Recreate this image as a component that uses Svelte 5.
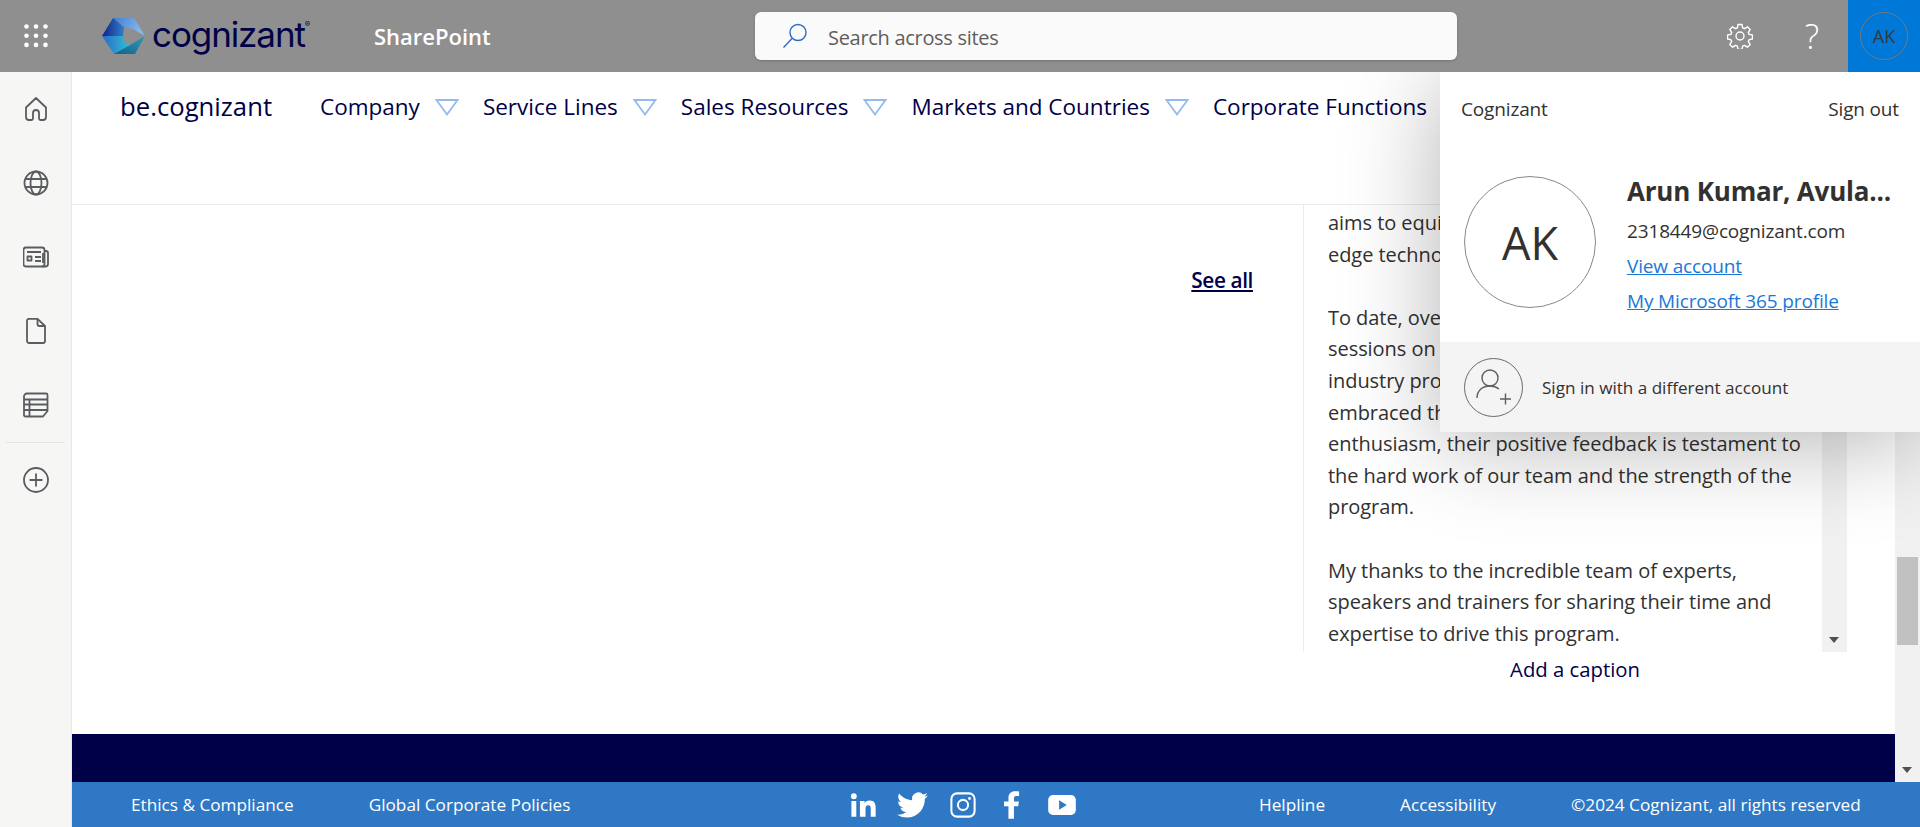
<script>
	const navItems = ['Company', 'Service Lines', 'Sales Resources', 'Markets and Countries', 'Corporate Functions'];
	const footerLeft = ['Ethics & Compliance', 'Global Corporate Policies'];
	const dots = [0, 1, 2];
	const article = [
		['aims to equip our associates with cutting-', 'edge technologies and practical skills.'],
		[
			'To date, over 5,000 colleagues attended',
			'sessions on our platform led by seasoned',
			'industry professionals. Our associates have',
			'embraced the program with remarkable',
			'enthusiasm, their positive feedback is testament to',
			'the hard work of our team and the strength of the',
			'program.'
		],
		[
			'My thanks to the incredible team of experts,',
			'speakers and trainers for sharing their time and',
			'expertise to drive this program.'
		]
	];
</script>

<div class="page">
	<header class="suite">
		<button class="waffle" aria-label="App launcher">
			<svg width="24" height="24" viewBox="0 0 24 24" fill="#fff">
				{#each dots as row}
					{#each dots as col}
						<circle cx={2.5 + col * 9.5} cy={2.5 + row * 9.2} r="2.3" />
					{/each}
				{/each}
			</svg>
		</button>
		<div class="brand">
			<svg class="hex" width="44" height="37" viewBox="0 0 44 37">
				<defs>
					<linearGradient id="top" x1="0" y1="0" x2="1" y2="0.3">
						<stop offset="0" stop-color="#3f7fcf" />
						<stop offset="1" stop-color="#86b8ee" />
					</linearGradient>
					<linearGradient id="left" x1="0" y1="0" x2="1" y2="0">
						<stop offset="0" stop-color="#14208a" />
						<stop offset="1" stop-color="#2f7fc4" />
					</linearGradient>
					<linearGradient id="low" x1="0" y1="0" x2="1" y2="0">
						<stop offset="0" stop-color="#2a6cc8" />
						<stop offset="1" stop-color="#2fc0d4" />
					</linearGradient>
					<linearGradient id="deep" x1="0" y1="1" x2="1" y2="0">
						<stop offset="0" stop-color="#14608c" />
						<stop offset="1" stop-color="#2c9cb4" />
					</linearGradient>
				</defs>
				<polygon points="11,0 32,0 43,18 31,11 22,9" fill="url(#top)" />
				<polygon points="0,18 11,0 22,9 21,18" fill="url(#left)" />
				<polygon points="0,18 21,18 21,23 28,27 12,36" fill="url(#low)" />
				<polygon points="43,18 33,36 12,36 28,27" fill="url(#deep)" />
			</svg>
			<span class="wordmark">cognizant<sup>®</sup></span>
		</div>
		<span class="product">SharePoint</span>
		<div class="search">
			<svg width="26" height="26" viewBox="0 0 26 26" fill="none" stroke="#2b6fc4" stroke-width="1.4">
				<circle cx="16" cy="9.5" r="8" />
				<path d="M10.3 15.2 1.5 24.5" />
			</svg>
			<span>Search across sites</span>
		</div>
		<div class="suite-actions">
			<button class="action" aria-label="Settings">
				<svg width="26" height="26" viewBox="0 0 26 26" fill="none" stroke="#fff" stroke-width="1.4" stroke-linejoin="round">
					<path d="M11 1.5h4l.6 3.3 2 .9 2.8-1.9 2.8 2.8-1.9 2.8.9 2 3.3.6v4l-3.3.6-.9 2 1.9 2.8-2.8 2.8-2.8-1.9-2 .9-.6 3.3h-4l-.6-3.3-2-.9-2.8 1.9-2.8-2.8 1.9-2.8-.9-2-3.3-.6v-4l3.3-.6.9-2-1.9-2.8 2.8-2.8 2.8 1.9 2-.9z" />
					<circle cx="13" cy="13" r="4" />
				</svg>
			</button>
			<button class="action help" aria-label="Help">?</button>
			<div class="me"><span>AK</span></div>
		</div>
	</header>

	<div class="frame">
		<nav class="rail">
			<button aria-label="Home">
				<svg width="26" height="26" viewBox="0 0 26 26">
					<path d="M3 11.5 13 2l10 9.500V21a3 3 0 0 1-3 3h-2.500a1.500 1.500 0 0 1-1.500-1.500V17a3 3 0 0 0-6 0v5.500A1.500 1.500 0 0 1 8.500 24H6a3 3 0 0 1-3-3z" />
				</svg>
			</button>
			<button aria-label="My sites">
				<svg width="26" height="26" viewBox="0 0 26 26">
					<circle cx="13" cy="13" r="11.500" />
					<ellipse cx="13" cy="13" rx="5.500" ry="11.500" />
					<path d="M2.500 9h21M2.500 17h21" />
				</svg>
			</button>
			<button aria-label="News">
				<svg width="26" height="26" viewBox="0 0 26 26">
					<rect x="0.500" y="3.500" width="21" height="19" rx="2.500" />
					<path d="M21.500 7H23a2 2 0 0 1 2 2v11a2.500 2.500 0 0 1-2.500 2.500H19M4 8h14M12 13h6M12 17h6M20 9v10" />
					<rect x="4.500" y="12.500" width="4" height="4" />
				</svg>
			</button>
			<button aria-label="Files">
				<svg width="26" height="26" viewBox="0 0 26 26">
					<path d="M6 .8h8.500L22 8v15a2 2 0 0 1-2 2H6a2 2 0 0 1-2-2V2.800a2 2 0 0 1 2-2z" />
					<path d="M14.500 .8V6a2 2 0 0 0 2 2H22" />
				</svg>
			</button>
			<button aria-label="Lists">
				<svg width="26" height="26" viewBox="0 0 26 26">
					<path d="M4 1.500h19a1.500 1.500 0 0 1 1.500 1.500v16L20 24.500H2.500A1.500 1.500 0 0 1 1 23V4.500a3 3 0 0 1 3-3z" />
					<path d="M1 7.500h23.500M1 12.500h23.500M1 18h23M6.500 7.500v17" />
				</svg>
			</button>
			<hr />
			<button aria-label="Create">
				<svg width="26" height="26" viewBox="0 0 26 26">
					<circle cx="13" cy="13" r="12" />
					<path d="M13 6.500v13M6.500 13h13" />
				</svg>
			</button>
		</nav>

		<main class="main">
			<div class="scroller">
				<div class="content">
					<div class="site-nav">
						<span class="site-name">be.cognizant</span>
						{#each navItems as item}
							<span class="nav-item">
								{item}
								<svg width="24" height="17" viewBox="0 0 24 17" fill="none" stroke="#93bbee" stroke-width="1.800">
									<path d="M1.500 1h21L12 15.500z" />
								</svg>
							</span>
						{/each}
					</div>
					<div class="body">
						<div class="left">
							<a class="see-all" href="#all">See all</a>
						</div>
						<div class="right">
							<div class="story">
								<div class="story-text">
									{#each article as para}
										<p>
											{#each para as line}
												<span>{line}</span>
											{/each}
										</p>
									{/each}
								</div>
								<div class="inner-bar"><i></i></div>
							</div>
							<div class="caption">Add a caption</div>
						</div>
					</div>
					<div class="band"></div>
				</div>
				<div class="page-bar"><b></b><i></i></div>
			</div>
			<footer class="legal">
				<div class="legal-left">
					{#each footerLeft as link}
						<span>{link}</span>
					{/each}
				</div>
				<div class="social">
					<svg class="in" width="28" height="28" viewBox="0 0 24 24" fill="#fff">
						<path d="M3.300 2a2.500 2.500 0 1 1 0 5 2.500 2.500 0 0 1 0-5zM1.200 8.500h4.200V22H1.200zM8.500 8.500h4v1.900c.7-1.200 2.100-2.200 4.200-2.200 4.500 0 5.300 2.900 5.300 6.700V22h-4.200v-6.300c0-1.500 0-3.500-2.100-3.500s-2.400 1.600-2.400 3.300V22H8.500z" />
					</svg>
					<svg class="tw" width="31" height="26" viewBox="0 2 24 20" fill="#fff">
						<path d="M23.950 4.570a10 10 0 0 1-2.820.77 4.960 4.960 0 0 0 2.160-2.720c-.95.55-2 .96-3.120 1.180a4.920 4.920 0 0 0-8.380 4.480C7.690 8.090 4.070 6.130 1.640 3.160a4.820 4.820 0 0 0-.67 2.480c0 1.710.87 3.210 2.190 4.100a4.900 4.900 0 0 1-2.230-.62v.06a4.920 4.920 0 0 0 3.950 4.830 5 5 0 0 1-2.210.08 4.940 4.940 0 0 0 4.600 3.420A9.870 9.870 0 0 1 0 19.540a14 14 0 0 0 7.560 2.210c9.050 0 14-7.500 14-13.980 0-.21 0-.42-.02-.63a9.940 9.940 0 0 0 2.460-2.550z" />
					</svg>
					<svg class="ig" width="26" height="26" viewBox="0 0 28 28" fill="none" stroke="#fff" stroke-width="2.200">
						<rect x="1.500" y="1.500" width="25" height="25" rx="6" />
						<circle cx="14" cy="14" r="5.500" />
						<circle cx="21" cy="7" r="1.500" fill="#fff" stroke="none" />
					</svg>
					<svg class="fb" width="16" height="30" viewBox="0 0 18 31" fill="#fff">
						<path d="M5 31V17H0v-5.500h5V7.500C5 2.500 8 0 12.300 0c2 0 3.700.2 4.700.3v5h-3c-2.400 0-2.800 1.200-2.800 2.800v3.400h5.600l-.8 5.500h-4.800v14z" />
					</svg>
					<svg class="yt" width="28" height="20" viewBox="0 0 29 21">
						<rect width="29" height="21" rx="5" fill="#fff" />
						<path d="M11.500 5.500v10l8-5z" fill="#2e78c5" />
					</svg>
				</div>
				<div class="legal-right">
					<span>Helpline</span>
					<span>Accessibility</span>
					<span>©2024 Cognizant, all rights reserved</span>
				</div>
			</footer>
		</main>

		<aside class="account">
			<div class="account-top">
				<span>Cognizant</span>
				<span>Sign out</span>
			</div>
			<div class="account-info">
				<div class="big-avatar">AK</div>
				<div class="details">
					<strong>Arun Kumar, Avula...</strong>
					<span>2318449@cognizant.com</span>
					<a href="#view">View account</a>
					<a href="#profile">My Microsoft 365 profile</a>
				</div>
			</div>
			<div class="other-account">
				<div class="add-user">
					<svg width="36" height="38" viewBox="0 0 36 38" fill="none" stroke="#605e5c" stroke-width="1.400">
						<circle cx="14" cy="10" r="8" />
						<path d="M1 30c0-8 6-12 13-12 3.500 0 6.500 1 9 3M24 31h11M29.500 25.500v11" />
					</svg>
				</div>
				<span>Sign in with a different account</span>
			</div>
		</aside>
	</div>
</div>

<style>
	:global(body) {
		margin: 0;
		background: #fff;
		font-family: 'Open Sans', 'Liberation Sans', sans-serif;
		color: #323130;
	}

	button {
		padding: 0;
		border: 0;
		background: none;
		font: inherit;
		display: flex;
		align-items: center;
		justify-content: center;
	}

	.page {
		width: 1920px;
		height: 827px;
		display: flex;
		flex-direction: column;
		overflow: hidden;
	}

	.suite {
		position: relative;
		z-index: 3;
		flex: 0 0 72px;
		display: flex;
		align-items: center;
		background: #8f8f8f;
	}

	.waffle {
		width: 72px;
		height: 72px;
	}

	.brand {
		display: flex;
		align-items: center;
		gap: 6px;
		margin-left: 30px;
		width: 272px;
	}

	.wordmark {
		font-family: Inter, 'Noto Sans', sans-serif;
		font-size: 35px;
		font-weight: 400;
		letter-spacing: -1.100px;
		line-height: 36px;
		color: #000048;
		position: relative;
		top: -2px;
	}

	.wordmark sup {
		font-size: 8px;
		vertical-align: 20px;
		line-height: 0;
		letter-spacing: 0;
	}

	.product {
		width: 381px;
		font-size: 22px;
		font-weight: 600;
		color: #fff;
	}

	.search {
		width: 702px;
		height: 48px;
		box-sizing: border-box;
		padding-left: 27px;
		display: flex;
		align-items: center;
		gap: 20px;
		background: #fafafa;
		border-radius: 6px;
		box-shadow: 0 1px 3px rgba(0, 0, 0, 0.2);
		font-size: 20px;
		letter-spacing: -0.300px;
		color: #605e5c;
	}

	.search span {
		position: relative;
		top: 1px;
	}

	.suite-actions {
		margin-left: auto;
		display: flex;
		align-items: center;
	}

	.action {
		width: 72px;
		height: 72px;
	}

	.help {
		color: #fff;
		font-size: 34px;
		font-weight: 300;
	}

	.me {
		width: 72px;
		height: 72px;
		background: #0078d7;
		display: flex;
		align-items: center;
		justify-content: center;
	}

	.me span {
		width: 46px;
		height: 46px;
		border: 1px solid #6f7a82;
		border-radius: 50%;
		display: flex;
		align-items: center;
		justify-content: center;
		font-size: 18px;
		color: #2f3a44;
	}

	.frame {
		position: relative;
		flex: 1;
		display: flex;
		min-height: 0;
	}

	.rail {
		flex: 0 0 71px;
		background: #f6f6f5;
		border-right: 1px solid #e8e8e8;
		display: flex;
		flex-direction: column;
		align-items: center;
	}

	.rail button {
		width: 71px;
		height: 74px;
	}

	.rail svg {
		fill: none;
		stroke: #5a5d60;
		stroke-width: 1.800;
		stroke-linejoin: round;
	}

	.rail hr {
		width: 59px;
		height: 1px;
		margin: 0;
		border: 0;
		background: #e4e4e4;
	}

	.main {
		flex: 1;
		min-width: 0;
		display: flex;
		flex-direction: column;
	}

	.scroller {
		flex: 1;
		min-height: 0;
		display: flex;
	}

	.content {
		flex: 1;
		min-width: 0;
		display: flex;
		flex-direction: column;
	}

	.site-nav {
		flex: 0 0 133px;
		box-sizing: border-box;
		padding: 18px 0 0 48px;
		border-bottom: 1px solid #ebebeb;
		display: flex;
		align-items: flex-start;
		color: #000048;
	}

	.site-name {
		width: 200px;
		font-size: 25.700px;
		line-height: 34px;
	}

	.nav-item {
		display: flex;
		align-items: center;
		gap: 15px;
		margin-right: 24px;
		font-size: 22.500px;
		line-height: 34px;
		white-space: nowrap;
	}

	.body {
		flex: 1;
		min-height: 0;
		display: flex;
	}

	.left {
		width: 1231px;
		box-sizing: border-box;
		padding: 61px 50px 0 0;
		text-align: right;
	}

	.see-all {
		font-size: 20.800px;
		font-weight: 600;
		letter-spacing: -0.400px;
		color: #000048;
	}

	.right {
		width: 544px;
	}

	.story {
		height: 447px;
		box-sizing: border-box;
		border-left: 1px solid #ebebeb;
		display: flex;
		overflow: hidden;
	}

	.story-text {
		flex: 1;
		padding: 2px 0 0 24px;
		font-size: 20px;
		line-height: 31.600px;
		letter-spacing: -0.050px;
		white-space: nowrap;
	}

	.story-text p {
		margin: 0 0 31.600px;
	}

	.story-text span {
		display: block;
	}

	.inner-bar {
		flex: 0 0 25px;
		position: relative;
		background: #f1f1f1;
	}

	.inner-bar i,
	.page-bar i {
		position: absolute;
		left: 7px;
		bottom: 9px;
		border: 5.500px solid transparent;
		border-top: 6px solid #505050;
		border-bottom: 0;
	}

	.caption {
		padding-top: 4px;
		text-align: center;
		font-size: 20.300px;
		line-height: 27px;
		color: #000048;
	}

	.band {
		flex: 0 0 48px;
		background: #000048;
	}

	.page-bar {
		flex: 0 0 25px;
		position: relative;
		background: #f1f1f1;
	}

	.page-bar b {
		position: absolute;
		top: 485px;
		left: 2px;
		width: 21px;
		height: 88px;
		background: #c1c1c1;
	}

	.legal {
		flex: 0 0 45px;
		display: flex;
		align-items: center;
		background: #2e78c5;
		color: #fff;
		font-size: 17.200px;
	}

	.legal-left {
		width: 778px;
		padding-left: 59px;
		box-sizing: border-box;
		display: flex;
		gap: 75px;
	}

	.social {
		width: 409px;
		display: flex;
		align-items: center;
	}

	.tw {
		margin-left: 19px;
	}

	.ig {
		margin-left: 22px;
	}

	.fb {
		margin-left: 28px;
	}

	.yt {
		margin-left: 28px;
	}

	.legal-right {
		display: flex;
		gap: 75px;
	}

	.account {
		position: absolute;
		z-index: 2;
		top: 0;
		right: 0;
		width: 480px;
		background: #fff;
		box-shadow: 0 10px 90px rgba(0, 0, 0, 0.3);
	}

	.account-top {
		height: 74px;
		box-sizing: border-box;
		padding: 0 21px;
		display: flex;
		align-items: center;
		justify-content: space-between;
		font-size: 19px;
		letter-spacing: -0.150px;
	}

	.account-info {
		height: 196px;
		box-sizing: border-box;
		padding: 30px 0 0 24px;
		display: flex;
		gap: 31px;
	}

	.big-avatar {
		width: 132px;
		height: 132px;
		border: 1px solid #8a8886;
		border-radius: 50%;
		display: flex;
		align-items: center;
		justify-content: center;
		box-sizing: border-box;
		font-size: 45px;
	}

	.details {
		display: flex;
		flex-direction: column;
		margin-top: -4px;
		font-size: 19px;
		letter-spacing: -0.150px;
	}

	.details strong {
		font-size: 26px;
		line-height: 38px;
		font-weight: 700;
		letter-spacing: -0.200px;
		margin-bottom: 4px;
	}

	.details span,
	.details a {
		line-height: 35px;
	}

	.details a {
		color: #1a78d8;
		text-decoration: underline;
	}

	.other-account {
		height: 90px;
		background: #f4f4f4;
		box-sizing: border-box;
		padding-left: 24px;
		display: flex;
		align-items: center;
		gap: 19px;
		font-size: 17.100px;
	}

	.add-user {
		width: 59px;
		height: 59px;
		box-sizing: border-box;
		border: 1.500px solid #6a6a6a;
		border-radius: 50%;
		display: flex;
		align-items: center;
		justify-content: center;
	}
</style>
